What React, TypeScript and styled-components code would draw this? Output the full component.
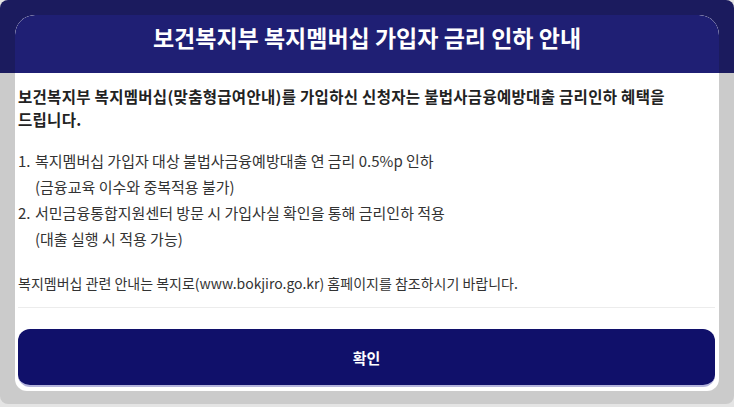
import React from 'react';
import styled, { createGlobalStyle } from 'styled-components';

const GlobalStyle = createGlobalStyle`
  html, body {
    margin: 0;
    padding: 0;
    background: #e4e4e4;
  }
  body {
    font-family: 'Noto Sans CJK KR', 'Noto Sans', sans-serif;
    word-break: keep-all;
  }
`;

const Frame = styled.div`
  width: 734px;
  height: 404px;
  box-sizing: border-box;
  padding: 15px 15px 13px 15px;
  border-radius: 8px;
  background: linear-gradient(to bottom, #1b1b5e 0, #1b1b5e 73px, #cbcbcb 73px);
  display: flex;
  flex-direction: column;
`;

const Dialog = styled.div`
  flex: 1;
  display: flex;
  flex-direction: column;
  background: #ffffff;
  border-radius: 20px 20px 12px 12px;
  overflow: hidden;
`;

const Header = styled.div`
  height: 58px;
  box-sizing: border-box;
  padding-top: 5px;
  display: flex;
  justify-content: center;
  background: #1f1f74;
  border-radius: 20px 20px 0 0;
`;

const Title = styled.h1`
  margin: 0;
  font-size: 23px;
  line-height: 34px;
  font-weight: 700;
  color: #ffffff;
`;

const Body = styled.div`
  flex: 1;
  display: flex;
  flex-direction: column;
  padding: 12px 4px 0 3px;
`;

const Lead = styled.p`
  margin: 0;
  font-size: 15.5px;
  line-height: 23px;
  font-weight: 700;
  letter-spacing: 0.3px;
  color: #222222;
`;

const List = styled.ol`
  margin: 17px 0 0 0;
  padding: 0;
  list-style: none;
`;

const Item = styled.li`
  display: flex;
  font-size: 15px;
  line-height: 26px;
  color: #333333;
`;

const Num = styled.span`
  width: 17px;
  flex-shrink: 0;
`;

const Note = styled.p`
  margin: 21px 0 0 0;
  padding-bottom: 14px;
  border-bottom: 1px solid #ececec;
  font-size: 14px;
  line-height: 20px;
  color: #333333;
`;

const Footer = styled.div`
  padding: 21px 4px 4px 3px;
`;

const ConfirmButton = styled.button`
  width: 100%;
  height: 58px;
  border: none;
  border-bottom: 2px solid #b4b4dc;
  border-radius: 12px;
  background: #10106a;
  color: #ffffff;
  font-family: inherit;
  font-size: 15px;
  font-weight: 700;
  cursor: pointer;
`;

const items = [
  ['복지멤버십 가입자 대상 불법사금융예방대출 연 금리 0.5%p 인하', '(금융교육 이수와 중복적용 불가)'],
  ['서민금융통합지원센터 방문 시 가입사실 확인을 통해 금리인하 적용', '(대출 실행 시 적용 가능)']
];

const App: React.FunctionComponent = () => (
  <>
    <GlobalStyle />
    <Frame>
      <Dialog>
        <Header>
          <Title>보건복지부 복지멤버십 가입자 금리 인하 안내</Title>
        </Header>
        <Body>
          <Lead>
            보건복지부 복지멤버십(맞춤형급여안내)를 가입하신 신청자는 불법사금융예방대출 금리인하 혜택을
            드립니다.
          </Lead>
          <List>
            {items.map(([main, sub], i) => (
              <Item key={i}>
                <Num>{i + 1}.</Num>
                <span>
                  {main}
                  <br />
                  {sub}
                </span>
              </Item>
            ))}
          </List>
          <Note>복지멤버십 관련 안내는 복지로(www.bokjiro.go.kr) 홈페이지를 참조하시기 바랍니다.</Note>
        </Body>
        <Footer>
          <ConfirmButton>확인</ConfirmButton>
        </Footer>
      </Dialog>
    </Frame>
  </>
);

export default App;
